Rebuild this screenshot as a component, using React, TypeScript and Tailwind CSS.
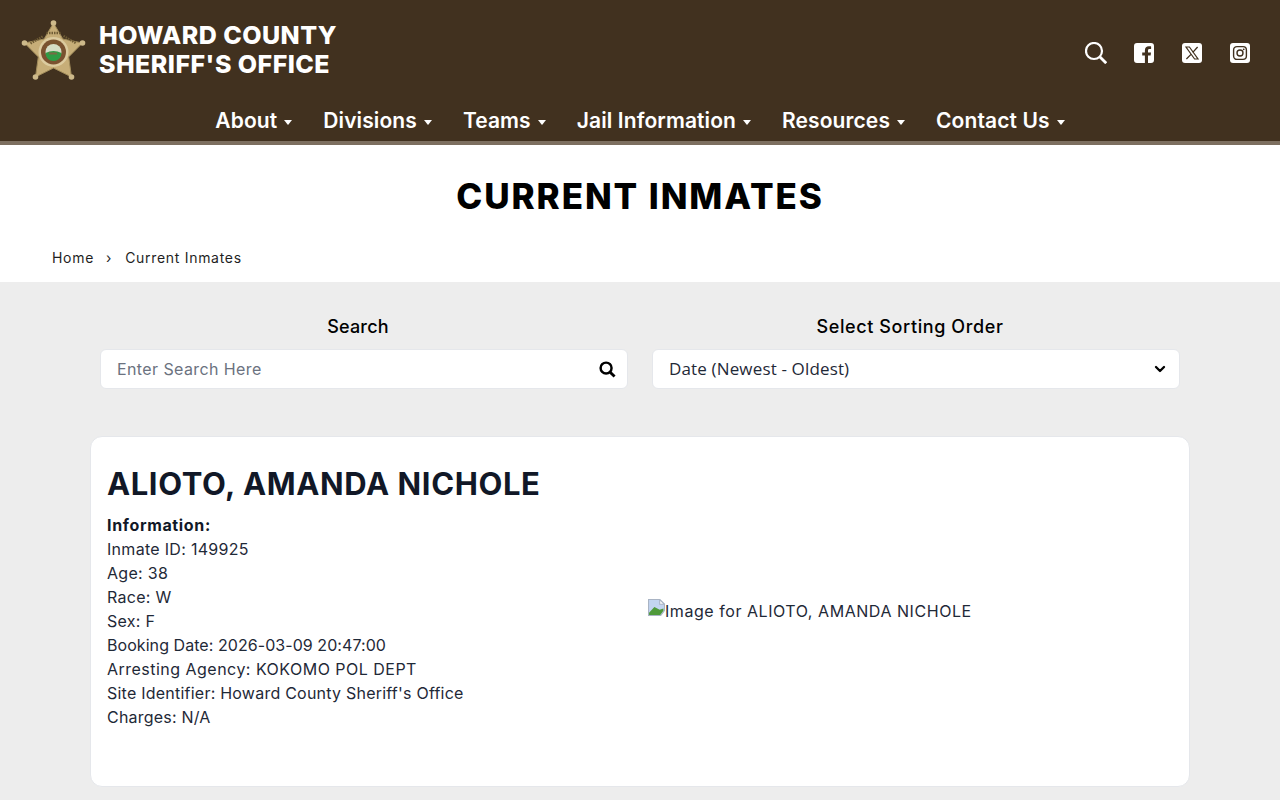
import { ChevronDown } from 'lucide-react';

const NAV_ITEMS = ['About', 'Divisions', 'Teams', 'Jail Information', 'Resources', 'Contact Us'];

const DETAILS = [
  { text: 'Inmate ID: 149925', track: 'tracking-[0.3px]' },
  { text: 'Age: 38', track: 'tracking-[0.3px]' },
  { text: 'Race: W', track: 'tracking-[0.3px]' },
  { text: 'Sex: F', track: 'tracking-[0.3px]' },
  { text: 'Booking Date: 2026-03-09 20:47:00', track: 'tracking-[0.06px]' },
  { text: 'Arresting Agency: KOKOMO POL DEPT', track: 'tracking-[0.48px]' },
  { text: "Site Identifier: Howard County Sheriff's Office", track: 'tracking-[0.23px]' },
  { text: 'Charges: N/A', track: 'tracking-[0.2px]' },
];

function Badge() {
  const tips = [
    [32, 4],
    [61, 24],
    [50, 58],
    [14, 58],
    [3, 24],
  ];
  return (
    <svg viewBox="0 0 64 64" className="w-[65px] h-[64px] shrink-0">
      <polygon
        points="32,4 41.4,20 61,24 47.2,37.9 50,58 32,49 14,58 16.8,37.9 3,24 22.6,20"
        fill="#c7ae78"
        stroke="#a08b5a"
        strokeWidth="1"
        strokeLinejoin="round"
      />
      <path d="M9 24.5 L22 17 M42 17 L55 24.5" stroke="#6f5c35" strokeWidth="2.5" strokeDasharray="1.5 1" />
      <path d="M25 14 H39" stroke="#6f5c35" strokeWidth="2.5" strokeDasharray="1.5 1" />
      {tips.map(([x, y]) => (
        <circle key={`${x}-${y}`} cx={x} cy={y} r="2.8" fill="#cdb98a" />
      ))}
      <circle cx="32" cy="33" r="15" fill="#dccb9f" />
      <circle cx="32" cy="33" r="12.5" fill="#7a5230" />
      <circle cx="32" cy="33" r="8" fill="#d6dcc6" />
      <path d="M24 34 Q32 30 40 34 A8 8 0 0 1 24 34 Z" fill="#2f9c45" />
      <path d="M27 33.5 h8 l1 2 h-8 Z" fill="#7a6a45" />
    </svg>
  );
}

function BrokenImage() {
  return (
    <svg viewBox="0 0 16 16" className="w-[17px] h-[17px] shrink-0 self-start">
      <path d="M0.5 0.5 H11 L15.5 5 V11 L12 15.5 H0.5 Z" fill="#c3d5f0" stroke="#a9b4c4" strokeWidth="1" />
      <path d="M11 0.5 V5 H15.5 Z" fill="#fff" stroke="#a9b4c4" strokeWidth="1" />
      <path d="M1 13 L6 7.5 L11 10 L14.5 9 V11 L11.5 15 H1 Z" fill="#4f9a3a" />
    </svg>
  );
}

export default function App() {
  return (
    <div className="min-h-screen bg-[#ededed] font-['Inter',sans-serif] text-[#111827]">
      <header className="h-[145px] pt-[19px] bg-[#41311f] border-b-4 border-[#7d6f60] text-white">
        <div className="flex items-center justify-between h-[64px] pl-[21px] pr-[30px]">
          <div className="flex items-center gap-[13px]">
            <Badge />
            <h1 className="pb-[2px] text-[25px] leading-[29px] font-extrabold tracking-[0.45px]">
              HOWARD COUNTY
              <br />
              SHERIFF'S OFFICE
            </h1>
          </div>
          <div className="flex items-center gap-[27px] pt-[4px]">
            <svg viewBox="0 0 22 22" className="w-[22px] h-[22px]" fill="none" stroke="#fff">
              <circle cx="9" cy="9" r="8" strokeWidth="2.2" />
              <path d="M15 15 L21.2 21.2" strokeWidth="2.8" />
            </svg>
            <svg viewBox="0 0 20 20" className="w-[20px] h-[20px]">
              <path
                d="M3 0 H17 A3 3 0 0 1 20 3 V17 A3 3 0 0 1 17 20 H14 V12.6 H16.6 L17 9.5 H14 V7.6 C14 6.7 14.3 6.1 15.5 6.1 H17.1 V3.4 C16.8 3.4 15.9 3.3 14.8 3.3 C12.5 3.3 10.9 4.7 10.9 7.3 V9.5 H8.2 V12.6 H10.9 V20 H3 A3 3 0 0 1 0 17 V3 A3 3 0 0 1 3 0 Z"
                fill="#fff"
              />
            </svg>
            <svg viewBox="0 0 20 20" className="w-[20px] h-[20px] ml-[1px]">
              <rect width="20" height="20" rx="3" fill="#fff" />
              <path d="M4 4 H7.4 L16 16 H12.6 Z" fill="none" stroke="#41311f" strokeWidth="1.2" />
              <path d="M15.6 4 L10.8 9.4 M9 11.4 L4.4 16" stroke="#41311f" strokeWidth="1.3" />
            </svg>
            <svg viewBox="0 0 20 20" className="w-[20px] h-[20px] ml-[1px]">
              <rect width="20" height="20" rx="3" fill="#fff" />
              <rect x="3.6" y="3.6" width="12.8" height="12.8" rx="3.4" fill="none" stroke="#41311f" strokeWidth="1.4" />
              <circle cx="10" cy="10" r="3" fill="none" stroke="#41311f" strokeWidth="1.4" />
              <circle cx="13.7" cy="6.3" r="0.9" fill="#41311f" />
            </svg>
          </div>
        </div>
        <nav className="flex justify-center gap-[31px] mt-[24px]">
          {NAV_ITEMS.map((item) => (
            <a key={item} className="flex items-center gap-[7px] text-[21px] leading-[28px] font-semibold tracking-[0.1px]">
              {item}
              <span className="w-0 h-0 border-x-[4px] border-x-transparent border-t-[5px] border-t-white mt-[2px]" />
            </a>
          ))}
        </nav>
      </header>

      <section className="h-[137px] bg-white pt-[29px]">
        <h2 className="text-center text-[35px] leading-[44px] font-extrabold tracking-[1.9px] text-black">CURRENT INMATES</h2>
        <div className="flex items-center mt-[29px] pl-[52px] text-[14px] leading-[20px] tracking-[0.7px] text-[#1f1f1f]">
          <span className="mt-[1px]">Home</span>
          <span className="ml-[12px] mr-[13px]">›</span>
          <span>Current Inmates</span>
        </div>
      </section>

      <main className="px-[90px]">
        <div className="grid grid-cols-2 gap-[24px] px-[10px] pt-[33px]">
          <div>
            <label className="block pr-[12px] text-center text-[18px] leading-[24px] font-medium tracking-[0.2px] text-black">Search</label>
            <div className="flex items-center justify-between h-[40px] mt-[10px] pl-[16px] pr-[11px] bg-white rounded-md border border-[#e5e7eb]">
              <span className="text-[16px] tracking-[0.4px] text-[#6b7280]">Enter Search Here</span>
              <svg viewBox="0 0 18 18" className="w-[17px] h-[17px]" fill="none" stroke="#000">
                <circle cx="7.5" cy="7.5" r="5.8" strokeWidth="2.6" />
                <path d="M11.8 11.8 L16.5 16.5" strokeWidth="3" />
              </svg>
            </div>
          </div>
          <div>
            <label className="block pr-[12px] text-center text-[18px] leading-[24px] font-medium tracking-[0.6px] text-black">
              Select Sorting Order
            </label>
            <div className="flex items-center justify-between h-[40px] mt-[10px] pl-[16px] pr-[11px] bg-white rounded-md border border-[#e5e7eb]">
              <span className="font-['Open_Sans',sans-serif] text-[17px] tracking-[0.15px] mb-[1px] text-[#1f2937]">Date (Newest - Oldest)</span>
              <ChevronDown className="w-[16px] h-[16px] text-black" strokeWidth={3.5} />
            </div>
          </div>
        </div>

        <article className="grid grid-cols-2 gap-[16px] h-[351px] mt-[47px] p-[16px] bg-white rounded-xl border border-[#e5e7eb]">
          <div>
            <h3 className="mt-[11px] text-[31px] leading-[40px] font-bold tracking-[0.6px] text-[#111827]">ALIOTO, AMANDA NICHOLE</h3>
            <p className="mt-[9px] text-[16px] leading-[24px] font-bold tracking-[0.65px]">Information:</p>
            {DETAILS.map((line) => (
              <p key={line.text} className={`text-[16px] leading-[24px] text-[#1f2937] ${line.track}`}>
                {line.text}
              </p>
            ))}
          </div>
          <div className="flex items-center pb-[1px]">
            <div className="flex items-center text-[16px] leading-[24px] tracking-[0.55px] text-[#1f2937]">
              <BrokenImage />
              <span>Image for ALIOTO, AMANDA NICHOLE</span>
            </div>
          </div>
        </article>
      </main>
    </div>
  );
}
